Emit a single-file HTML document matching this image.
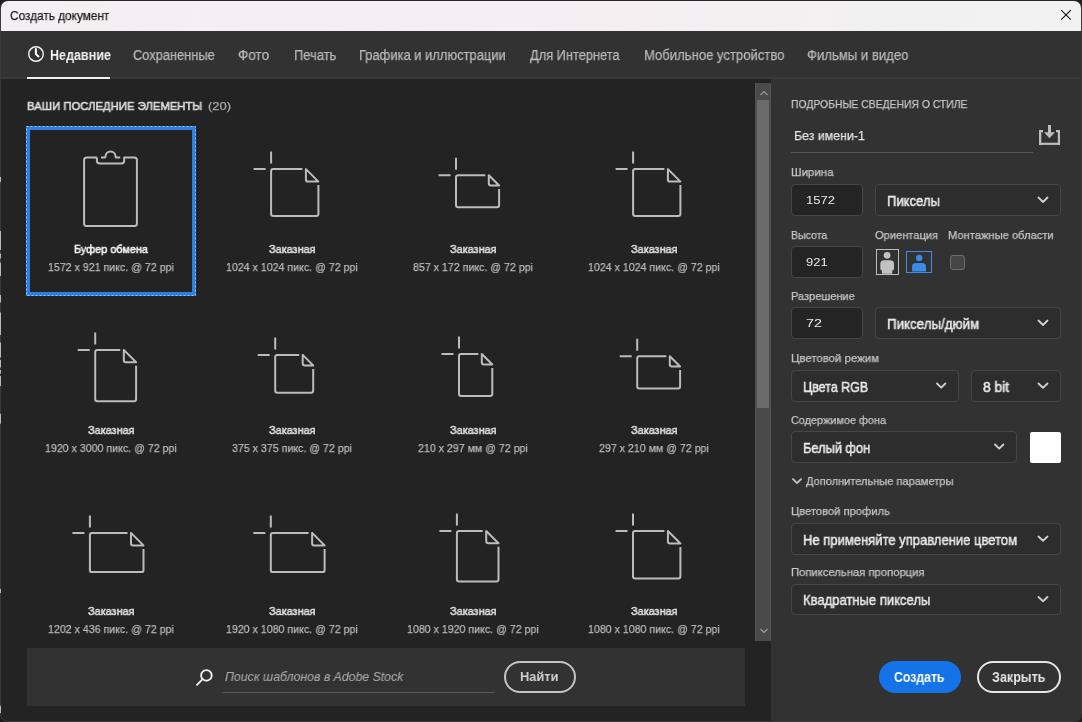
<!DOCTYPE html>
<html><head><meta charset="utf-8">
<style>
html,body{margin:0;padding:0;width:1082px;height:722px;overflow:hidden;background:#1e1e1e;}
body{position:relative;font-family:"Liberation Sans", sans-serif;}
.t{position:absolute;white-space:pre;line-height:normal;transform-origin:0 0;will-change:transform;}
.a{position:absolute;}
.win{position:absolute;left:0;top:0;width:1082px;height:722px;box-sizing:border-box;border:1px solid #3a3a3a;border-top-color:#262626;border-radius:8px;overflow:hidden;background:#232323;}
.inp{position:absolute;background:#242424;border:1px solid #454545;border-radius:4px;box-sizing:border-box;}
.dd{position:absolute;background:#2d2d2d;border:1px solid #464646;border-radius:4px;box-sizing:border-box;}
svg{position:absolute;overflow:visible;}
</style></head><body>
<div class="win">
  <div class="a" style="left:0;top:0;width:1080px;height:29.5px;background:linear-gradient(90deg,#f4eff2 0%,#f7eef3 35%,#f5eff2 60%,#f2f1f2 80%,#f2f2f2 100%);"></div>
  <div class="a" style="left:0;top:29.5px;width:1080px;height:46.5px;background:#323232;"></div>
  <div class="a" style="left:0;top:76px;width:1080px;height:2px;background:#3a3a3a;"></div>
  <div class="a" style="left:770px;top:78px;width:310px;height:642px;background:#323232;"></div>
</div>
<svg width="1082" height="722" style="left:0;top:0" fill="#b8b8b8"><rect x="0" y="177" width="1" height="5.0"/><rect x="0" y="231" width="1" height="19.0"/><rect x="0" y="253.6" width="1" height="5.0"/><rect x="0" y="262.5" width="1" height="13.5"/><rect x="0" y="295" width="1" height="7.5"/><rect x="0" y="312.5" width="1" height="22.5"/><rect x="0" y="342.5" width="1" height="15.0"/><rect x="0" y="360" width="1" height="7.5"/><rect x="0" y="370" width="1" height="3.7"/><rect x="0" y="376" width="1" height="10.0"/><rect x="0" y="413.7" width="1" height="10.0"/><rect x="0" y="589" width="1" height="4.0"/><rect x="0" y="705.8" width="1" height="7.2"/></svg>
<!-- tab underline -->
<div class="a" style="left:27px;top:77px;width:83px;height:2px;background:#f0f0f0;"></div>
<!-- close X -->
<svg width="1082" height="722" style="left:0;top:0">
  <path d="M1061.2 10.1 L1070.8 19.7 M1070.8 10.1 L1061.2 19.7" stroke="#111" stroke-width="1.1" fill="none"/>
  <!-- clock -->
  <circle cx="36" cy="54" r="7.25" stroke="#f0f0f0" stroke-width="1.45" fill="none"/>
  <path d="M35.9 49 L35.9 54 L38.5 56.4" stroke="#fafafa" stroke-width="2.1" fill="none" stroke-linecap="round" stroke-linejoin="round"/>
</svg>
<!-- selection box -->
<svg width="1082" height="722" style="left:0;top:0" fill="none"><rect x="26.5" y="126.5" width="169" height="169" stroke="#2a78dc" stroke-width="1"/><rect x="26.5" y="126.5" width="169" height="169" stroke="#9cc6f8" stroke-width="1" stroke-dasharray="2 2"/></svg>
<div class="a" style="left:27px;top:127px;width:168px;height:168px;box-sizing:border-box;border:3px solid #2f7fe0;"></div>
<!-- scrollbar -->
<div class="a" style="left:755px;top:83px;width:16px;height:558px;background:#4a4a4a;box-sizing:border-box;border-left:1px solid #535353;border-right:1px solid #535353;"></div>
<div class="a" style="left:757px;top:100px;width:12px;height:308px;background:#6b6b6b;"></div>
<svg width="1082" height="722" style="left:0;top:0">
  <path d="M760.5 95 L764 91.5 L767.5 95" stroke="#9a9a9a" stroke-width="1.2" fill="none"/>
  <path d="M760.5 629 L764 632.5 L767.5 629" stroke="#9a9a9a" stroke-width="1.2" fill="none"/>
</svg>
<!-- search bar -->
<div class="a" style="left:27px;top:648px;width:718px;height:58px;background:#323232;"></div>
<div class="a" style="left:222px;top:691.5px;width:271.5px;height:1px;background:#5a5a5a;"></div>
<div class="a" style="left:504px;top:661px;width:72px;height:31.5px;box-sizing:border-box;border:2px solid #c4c4c4;border-radius:16px;"></div>
<svg width="1082" height="722" style="left:0;top:0">
  <circle cx="206.4" cy="675.4" r="5.3" stroke="#f0f0f0" stroke-width="1.9" fill="none"/>
  <path d="M202.6 679.2 L197 684.8" stroke="#f0f0f0" stroke-width="1.9" stroke-linecap="round"/>
</svg>
<!-- ICONS -->
<svg width="1082" height="722" style="left:0;top:0" fill="none" stroke="#bcbcbc" stroke-width="2" stroke-linejoin="round"><path d="M271.10 151.60 V163.60 M253.60 169.10 H265.60 M302.40 169.10 H273.30 Q271.10 169.10 271.10 171.30 V213.80 Q271.10 216.00 273.30 216.00 H316.20 Q318.40 216.00 318.40 213.80 V185.10 M305.90 169.10 V179.40 Q305.90 181.60 308.10 181.60 H318.40 Z"/><path d="M456.00 157.70 V169.70 M438.50 175.20 H450.50 M485.30 175.20 H458.20 Q456.00 175.20 456.00 177.40 V205.00 Q456.00 207.20 458.20 207.20 H496.90 Q499.10 207.20 499.10 205.00 V189.00 M488.80 175.20 V183.30 Q488.80 185.50 491.00 185.50 H499.10 Z"/><path d="M633.10 151.60 V163.60 M615.60 169.10 H627.60 M664.40 169.10 H635.30 Q633.10 169.10 633.10 171.30 V213.80 Q633.10 216.00 635.30 216.00 H678.20 Q680.40 216.00 680.40 213.80 V185.10 M667.90 169.10 V179.40 Q667.90 181.60 670.10 181.60 H680.40 Z"/><path d="M95.20 332.40 V344.40 M77.70 349.90 H89.70 M120.30 349.90 H97.40 Q95.20 349.90 95.20 352.10 V399.00 Q95.20 401.20 97.40 401.20 H133.90 Q136.10 401.20 136.10 399.00 V365.70 M123.80 349.90 V360.00 Q123.80 362.20 126.00 362.20 H136.10 Z"/><path d="M275.20 337.40 V349.40 M257.70 354.90 H269.70 M299.20 354.90 H277.40 Q275.20 354.90 275.20 357.10 V390.60 Q275.20 392.80 277.40 392.80 H311.00 Q313.20 392.80 313.20 390.60 V368.90 M302.70 354.90 V363.20 Q302.70 365.40 304.90 365.40 H313.20 Z"/><path d="M459.00 336.50 V348.50 M441.50 354.00 H453.50 M478.30 354.00 H461.20 Q459.00 354.00 459.00 356.20 V393.70 Q459.00 395.90 461.20 395.90 H490.10 Q492.30 395.90 492.30 393.70 V368.00 M481.80 354.00 V362.30 Q481.80 364.50 484.00 364.50 H492.30 Z"/><path d="M637.20 338.70 V350.70 M619.70 356.20 H631.70 M666.30 356.20 H639.40 Q637.20 356.20 637.20 358.40 V386.20 Q637.20 388.40 639.40 388.40 H677.90 Q680.10 388.40 680.10 386.20 V370.00 M669.80 356.20 V364.30 Q669.80 366.50 672.00 366.50 H680.10 Z"/><path d="M89.90 515.40 V527.40 M72.40 532.90 H84.40 M127.50 532.90 H92.10 Q89.90 532.90 89.90 535.10 V569.90 Q89.90 572.10 92.10 572.10 H141.30 Q143.50 572.10 143.50 569.90 V548.90 M131.00 532.90 V543.20 Q131.00 545.40 133.20 545.40 H143.50 Z"/><path d="M270.80 515.40 V527.40 M253.30 532.90 H265.30 M308.60 532.90 H273.00 Q270.80 532.90 270.80 535.10 V569.90 Q270.80 572.10 273.00 572.10 H322.40 Q324.60 572.10 324.60 569.90 V548.90 M312.10 532.90 V543.20 Q312.10 545.40 314.30 545.40 H324.60 Z"/><path d="M456.90 513.50 V525.50 M439.40 531.00 H451.40 M482.70 531.00 H459.10 Q456.90 531.00 456.90 533.20 V579.30 Q456.90 581.50 459.10 581.50 H496.30 Q498.50 581.50 498.50 579.30 V546.80 M486.20 531.00 V541.10 Q486.20 543.30 488.40 543.30 H498.50 Z"/><path d="M633.00 513.50 V525.50 M615.50 531.00 H627.50 M664.40 531.00 H635.20 Q633.00 531.00 633.00 533.20 V576.20 Q633.00 578.40 635.20 578.40 H678.20 Q680.40 578.40 680.40 576.20 V547.00 M667.90 531.00 V541.30 Q667.90 543.50 670.10 543.50 H680.40 Z"/><path d="M96.9 157.5 H86.6 Q84.1 157.5 84.1 160 V223.4 Q84.1 225.9 86.6 225.9 H134.4 Q136.9 225.9 136.9 223.4 V160 Q136.9 157.5 134.4 157.5 H124.2 V160.8 Q124.2 163.6 121.4 163.6 H99.7 Q96.9 163.6 96.9 160.8 V157.5"/><path d="M101 157.6 H104.3 Q105.5 157.6 105.5 156.4 A5 5 0 0 1 115.5 156.4 Q115.5 157.6 116.7 157.6 H120.2"/></svg>
<!-- right panel -->
<div class="a" style="left:791px;top:152.3px;width:242px;height:1px;background:#555;"></div>
<svg width="1082" height="722" style="left:0;top:0">
  <g fill="#bebebe"><rect x="1039" y="130" width="2.3" height="15"/><rect x="1039" y="130" width="4" height="2.2"/><rect x="1057.8" y="130" width="2.2" height="15"/><rect x="1056" y="130" width="4" height="2.2"/><rect x="1039" y="142.7" width="21" height="2.2"/><rect x="1048" y="125" width="3" height="8"/><path d="M1044 132.3 L1055 132.3 L1049.5 138.2 Z"/></g>
</svg>
<div class="inp" style="left:791px;top:184px;width:72px;height:32px;"></div>
<div class="dd" style="left:875px;top:184px;width:186px;height:32px;"></div>
<div class="inp" style="left:791px;top:246px;width:72px;height:32px;"></div>
<div class="inp" style="left:791px;top:307px;width:72px;height:32px;"></div>
<div class="dd" style="left:875px;top:307px;width:186px;height:32px;"></div>
<div class="dd" style="left:791px;top:370px;width:168px;height:32px;"></div>
<div class="dd" style="left:971px;top:370px;width:90px;height:32px;"></div>
<div class="dd" style="left:791px;top:431px;width:226px;height:32px;"></div>
<div class="a" style="left:1030px;top:432px;width:31px;height:31px;background:#fff;border-radius:2px;"></div>
<div class="dd" style="left:791px;top:523px;width:270px;height:32px;"></div>
<div class="dd" style="left:791px;top:584px;width:270px;height:31px;"></div>
<!-- orientation -->
<div class="a" style="left:875.5px;top:249px;width:23.3px;height:26.4px;box-sizing:border-box;border:1.8px solid #bdbdbd;"></div>
<div class="a" style="left:905.5px;top:251.1px;width:26.6px;height:22.4px;box-sizing:border-box;border:1.8px solid #3b8ced;"></div>
<svg width="1082" height="722" style="left:0;top:0">
  <circle cx="887.1" cy="255.3" r="3.4" fill="#c2c2c2"/>
  <path d="M880.3 268.5 L880.3 263.8 Q880.3 260.2 884 260.2 L890.3 260.2 Q894 260.2 894 263.8 L894 268.5 Q894 270.3 892.2 270.6 L892.2 273.8 L881.9 273.8 L881.9 270.6 Q880.3 270.3 880.3 268.5 Z" fill="#c2c2c2"/>
  <circle cx="919.2" cy="257.9" r="3.2" fill="#3b8beb"/>
  <path d="M912.1 271.6 L912.1 266.8 Q912.1 263.1 915.8 263.1 L922.3 263.1 Q926 263.1 926 266.8 L926 271.6 Z" fill="#3b8beb"/>
</svg>
<div class="a" style="left:949.5px;top:254.8px;width:15.2px;height:14.8px;box-sizing:border-box;background:#454545;border:1px solid #6c6c6c;border-radius:3px;"></div>
<!-- chevrons -->
<svg width="1082" height="722" style="left:0;top:0" fill="none" stroke="#cdcdcd" stroke-width="1.9" stroke-linecap="round" stroke-linejoin="round">
  <path d="M1038.5 197.5 L1043 202 L1047.5 197.5"/>
  <path d="M1038.5 320.5 L1043 325 L1047.5 320.5"/>
  <path d="M937 383.5 L941.2 387.7 L945.4 383.5"/>
  <path d="M1038.5 383.5 L1043 387.7 L1047.5 383.5"/>
  <path d="M995 444.5 L999.2 448.7 L1003.4 444.5"/>
  <path d="M793 479.1 L797 483.1 L801 479.1" stroke="#c0c0c0"/>
  <path d="M1038.5 536.5 L1043 540.7 L1047.5 536.5"/>
  <path d="M1038.5 597 L1043 601.2 L1047.5 597"/>
</svg>
<!-- buttons -->
<div class="a" style="left:879px;top:661px;width:82px;height:32px;background:#1473e6;border-radius:16px;"></div>
<div class="a" style="left:977.2px;top:661px;width:83.6px;height:32px;box-sizing:border-box;border:2px solid #e6e6e6;border-radius:16px;"></div>
<!-- TEXTS -->
<div class="t" style="left:9.78px;top:8px;font-size:13px;font-weight:400;-webkit-text-stroke:0.25px #1a1a1a;color:#1a1a1a;transform:scaleX(0.9086)">Создать документ</div>
<div class="t" style="left:49.70px;top:47px;font-size:14px;font-weight:700;color:#f4f4f4;transform:scaleX(0.8951)">Недавние</div>
<div class="t" style="left:133.33px;top:47px;font-size:14px;font-weight:400;-webkit-text-stroke:0.25px #b9b9b9;color:#b9b9b9;transform:scaleX(0.9177)">Сохраненные</div>
<div class="t" style="left:238.08px;top:47px;font-size:14px;font-weight:400;-webkit-text-stroke:0.25px #b9b9b9;color:#b9b9b9;transform:scaleX(0.9672)">Фото</div>
<div class="t" style="left:293.80px;top:47px;font-size:14px;font-weight:400;-webkit-text-stroke:0.25px #b9b9b9;color:#b9b9b9;transform:scaleX(0.9227)">Печать</div>
<div class="t" style="left:359.40px;top:47px;font-size:14px;font-weight:400;-webkit-text-stroke:0.25px #b9b9b9;color:#b9b9b9;transform:scaleX(0.9237)">Графика и иллюстрации</div>
<div class="t" style="left:529.50px;top:47px;font-size:14px;font-weight:400;-webkit-text-stroke:0.25px #b9b9b9;color:#b9b9b9;transform:scaleX(0.9156)">Для Интернета</div>
<div class="t" style="left:643.80px;top:47px;font-size:14px;font-weight:400;-webkit-text-stroke:0.25px #b9b9b9;color:#b9b9b9;transform:scaleX(0.9345)">Мобильное устройство</div>
<div class="t" style="left:807.08px;top:47px;font-size:14px;font-weight:400;-webkit-text-stroke:0.25px #b9b9b9;color:#b9b9b9;transform:scaleX(0.9369)">Фильмы и видео</div>
<div class="t" style="left:27.09px;top:99px;font-size:11.8px;font-weight:400;-webkit-text-stroke:0.6px #dcdcdc;color:#dcdcdc;transform:scaleX(0.9580)">ВАШИ ПОСЛЕДНИЕ ЭЛЕМЕНТЫ</div>
<div class="t" style="left:208.28px;top:99px;font-size:11.8px;font-weight:400;-webkit-text-stroke:0.25px #a9a9a9;color:#a9a9a9;transform:scaleX(1.0993)">(20)</div>
<div class="t" style="left:73.69px;top:242px;font-size:11.6px;font-weight:400;-webkit-text-stroke:0.55px #f4f4f4;color:#f4f4f4;transform:scaleX(0.9386)">Буфер обмена</div>
<div class="t" style="left:47.73px;top:260px;font-size:11.6px;font-weight:400;-webkit-text-stroke:0.25px #bababa;color:#bababa;transform:scaleX(0.9164)">1572 x 921 пикс. @ 72 ppi</div>
<div class="t" style="left:268.75px;top:242px;font-size:11.6px;font-weight:400;-webkit-text-stroke:0.55px #dedede;color:#dedede;transform:scaleX(0.9386)">Заказная</div>
<div class="t" style="left:225.91px;top:260px;font-size:11.6px;font-weight:400;-webkit-text-stroke:0.25px #bababa;color:#bababa;transform:scaleX(0.9164)">1024 x 1024 пикс. @ 72 ppi</div>
<div class="t" style="left:449.75px;top:242px;font-size:11.6px;font-weight:400;-webkit-text-stroke:0.55px #dedede;color:#dedede;transform:scaleX(0.9386)">Заказная</div>
<div class="t" style="left:412.68px;top:260px;font-size:11.6px;font-weight:400;-webkit-text-stroke:0.25px #bababa;color:#bababa;transform:scaleX(0.9164)">857 x 172 пикс. @ 72 ppi</div>
<div class="t" style="left:630.75px;top:242px;font-size:11.6px;font-weight:400;-webkit-text-stroke:0.55px #dedede;color:#dedede;transform:scaleX(0.9386)">Заказная</div>
<div class="t" style="left:587.91px;top:260px;font-size:11.6px;font-weight:400;-webkit-text-stroke:0.25px #bababa;color:#bababa;transform:scaleX(0.9164)">1024 x 1024 пикс. @ 72 ppi</div>
<div class="t" style="left:87.75px;top:423px;font-size:11.6px;font-weight:400;-webkit-text-stroke:0.55px #dedede;color:#dedede;transform:scaleX(0.9386)">Заказная</div>
<div class="t" style="left:44.91px;top:441px;font-size:11.6px;font-weight:400;-webkit-text-stroke:0.25px #bababa;color:#bababa;transform:scaleX(0.9164)">1920 x 3000 пикс. @ 72 ppi</div>
<div class="t" style="left:268.75px;top:423px;font-size:11.6px;font-weight:400;-webkit-text-stroke:0.55px #dedede;color:#dedede;transform:scaleX(0.9386)">Заказная</div>
<div class="t" style="left:231.67px;top:441px;font-size:11.6px;font-weight:400;-webkit-text-stroke:0.25px #bababa;color:#bababa;transform:scaleX(0.9164)">375 x 375 пикс. @ 72 ppi</div>
<div class="t" style="left:449.75px;top:423px;font-size:11.6px;font-weight:400;-webkit-text-stroke:0.55px #dedede;color:#dedede;transform:scaleX(0.9386)">Заказная</div>
<div class="t" style="left:418.02px;top:441px;font-size:11.6px;font-weight:400;-webkit-text-stroke:0.25px #bababa;color:#bababa;transform:scaleX(0.9164)">210 x 297 мм @ 72 ppi</div>
<div class="t" style="left:630.75px;top:423px;font-size:11.6px;font-weight:400;-webkit-text-stroke:0.55px #dedede;color:#dedede;transform:scaleX(0.9386)">Заказная</div>
<div class="t" style="left:599.02px;top:441px;font-size:11.6px;font-weight:400;-webkit-text-stroke:0.25px #bababa;color:#bababa;transform:scaleX(0.9164)">297 x 210 мм @ 72 ppi</div>
<div class="t" style="left:87.75px;top:604px;font-size:11.6px;font-weight:400;-webkit-text-stroke:0.55px #dedede;color:#dedede;transform:scaleX(0.9386)">Заказная</div>
<div class="t" style="left:47.73px;top:622px;font-size:11.6px;font-weight:400;-webkit-text-stroke:0.25px #bababa;color:#bababa;transform:scaleX(0.9164)">1202 x 436 пикс. @ 72 ppi</div>
<div class="t" style="left:268.75px;top:604px;font-size:11.6px;font-weight:400;-webkit-text-stroke:0.55px #dedede;color:#dedede;transform:scaleX(0.9386)">Заказная</div>
<div class="t" style="left:225.91px;top:622px;font-size:11.6px;font-weight:400;-webkit-text-stroke:0.25px #bababa;color:#bababa;transform:scaleX(0.9164)">1920 x 1080 пикс. @ 72 ppi</div>
<div class="t" style="left:449.75px;top:604px;font-size:11.6px;font-weight:400;-webkit-text-stroke:0.55px #dedede;color:#dedede;transform:scaleX(0.9386)">Заказная</div>
<div class="t" style="left:406.91px;top:622px;font-size:11.6px;font-weight:400;-webkit-text-stroke:0.25px #bababa;color:#bababa;transform:scaleX(0.9164)">1080 x 1920 пикс. @ 72 ppi</div>
<div class="t" style="left:630.75px;top:604px;font-size:11.6px;font-weight:400;-webkit-text-stroke:0.55px #dedede;color:#dedede;transform:scaleX(0.9386)">Заказная</div>
<div class="t" style="left:587.91px;top:622px;font-size:11.6px;font-weight:400;-webkit-text-stroke:0.25px #bababa;color:#bababa;transform:scaleX(0.9164)">1080 x 1080 пикс. @ 72 ppi</div>
<div class="t" style="left:790.51px;top:97px;font-size:11.8px;font-weight:400;-webkit-text-stroke:0.25px #c6c6c6;color:#c6c6c6;transform:scaleX(0.8783)">ПОДРОБНЫЕ СВЕДЕНИЯ О СТИЛЕ</div>
<div class="t" style="left:793.53px;top:128px;font-size:13.5px;font-weight:400;-webkit-text-stroke:0.25px #e6e6e6;color:#e6e6e6;transform:scaleX(0.9168)">Без имени-1</div>
<div class="t" style="left:790.83px;top:165px;font-size:11.6px;font-weight:400;-webkit-text-stroke:0.25px #c6c6c6;color:#c6c6c6;transform:scaleX(0.9899)">Ширина</div>
<div class="t" style="left:805.85px;top:193px;font-size:11.8px;font-weight:400;-webkit-text-stroke:0.01px #e8e8e8;color:#e8e8e8;transform:scaleX(1.1014)">1572</div>
<div class="t" style="left:887.44px;top:193px;font-size:14.2px;font-weight:400;-webkit-text-stroke:0.5px #e8e8e8;color:#e8e8e8;transform:scaleX(0.9205)">Пикселы</div>
<div class="t" style="left:790.84px;top:228px;font-size:11.6px;font-weight:400;-webkit-text-stroke:0.25px #c6c6c6;color:#c6c6c6;transform:scaleX(0.9127)">Высота</div>
<div class="t" style="left:874.81px;top:228px;font-size:11.6px;font-weight:400;-webkit-text-stroke:0.25px #c6c6c6;color:#c6c6c6;transform:scaleX(0.9581)">Ориентация</div>
<div class="t" style="left:947.54px;top:228px;font-size:11.6px;font-weight:400;-webkit-text-stroke:0.25px #c6c6c6;color:#c6c6c6;transform:scaleX(0.9625)">Монтажные области</div>
<div class="t" style="left:806.39px;top:255px;font-size:11.8px;font-weight:400;-webkit-text-stroke:0.01px #e8e8e8;color:#e8e8e8;transform:scaleX(1.1023)">921</div>
<div class="t" style="left:790.84px;top:289px;font-size:11.6px;font-weight:400;-webkit-text-stroke:0.25px #c6c6c6;color:#c6c6c6;transform:scaleX(0.9522)">Разрешение</div>
<div class="t" style="left:806.46px;top:316px;font-size:11.8px;font-weight:400;-webkit-text-stroke:0.01px #e8e8e8;color:#e8e8e8;transform:scaleX(1.2107)">72</div>
<div class="t" style="left:887.44px;top:316px;font-size:14.2px;font-weight:400;-webkit-text-stroke:0.5px #e8e8e8;color:#e8e8e8;transform:scaleX(0.9406)">Пикселы/дюйм</div>
<div class="t" style="left:790.83px;top:351px;font-size:11.6px;font-weight:400;-webkit-text-stroke:0.25px #c6c6c6;color:#c6c6c6;transform:scaleX(0.9833)">Цветовой режим</div>
<div class="t" style="left:803.20px;top:379px;font-size:14.2px;font-weight:400;-webkit-text-stroke:0.5px #e8e8e8;color:#e8e8e8;transform:scaleX(0.8779)">Цвета RGB</div>
<div class="t" style="left:983.24px;top:379px;font-size:14.2px;font-weight:400;-webkit-text-stroke:0.5px #e8e8e8;color:#e8e8e8;transform:scaleX(0.9759)">8 bit</div>
<div class="t" style="left:790.97px;top:413px;font-size:11.6px;font-weight:400;-webkit-text-stroke:0.25px #c6c6c6;color:#c6c6c6;transform:scaleX(0.9370)">Содержимое фона</div>
<div class="t" style="left:803.14px;top:440px;font-size:14.2px;font-weight:400;-webkit-text-stroke:0.5px #e8e8e8;color:#e8e8e8;transform:scaleX(0.9020)">Белый фон</div>
<div class="t" style="left:806.02px;top:474px;font-size:11.6px;font-weight:400;-webkit-text-stroke:0.25px #c6c6c6;color:#c6c6c6;transform:scaleX(0.9525)">Дополнительные параметры</div>
<div class="t" style="left:790.83px;top:504px;font-size:11.6px;font-weight:400;-webkit-text-stroke:0.25px #c6c6c6;color:#c6c6c6;transform:scaleX(0.9645)">Цветовой профиль</div>
<div class="t" style="left:803.14px;top:532px;font-size:14.2px;font-weight:400;-webkit-text-stroke:0.5px #e8e8e8;color:#e8e8e8;transform:scaleX(0.9178)">Не применяйте управление цветом</div>
<div class="t" style="left:790.85px;top:565px;font-size:11.6px;font-weight:400;-webkit-text-stroke:0.25px #c6c6c6;color:#c6c6c6;transform:scaleX(0.9712)">Попиксельная пропорция</div>
<div class="t" style="left:803.14px;top:592px;font-size:14.2px;font-weight:400;-webkit-text-stroke:0.5px #e8e8e8;color:#e8e8e8;transform:scaleX(0.9184)">Квадратные пикселы</div>
<div class="t" style="left:894.26px;top:669px;font-size:14.2px;font-weight:700;color:#ffffff;transform:scaleX(0.8660)">Создать</div>
<div class="t" style="left:992.13px;top:669px;font-size:14.2px;font-weight:700;color:#e4e4e4;transform:scaleX(0.8859)">Закрыть</div>
<div class="t" style="left:519.84px;top:669px;font-size:13.5px;font-weight:700;color:#d2d2d2;transform:scaleX(0.9492)">Найти</div>
<div class="t" style="left:225.22px;top:669px;font-size:12.8px;font-weight:400;font-style:italic;-webkit-text-stroke:0.1px #a8a8a8;color:#a8a8a8;transform:scaleX(0.9602)">Поиск шаблонов в Adobe Stock</div>
</body></html>
